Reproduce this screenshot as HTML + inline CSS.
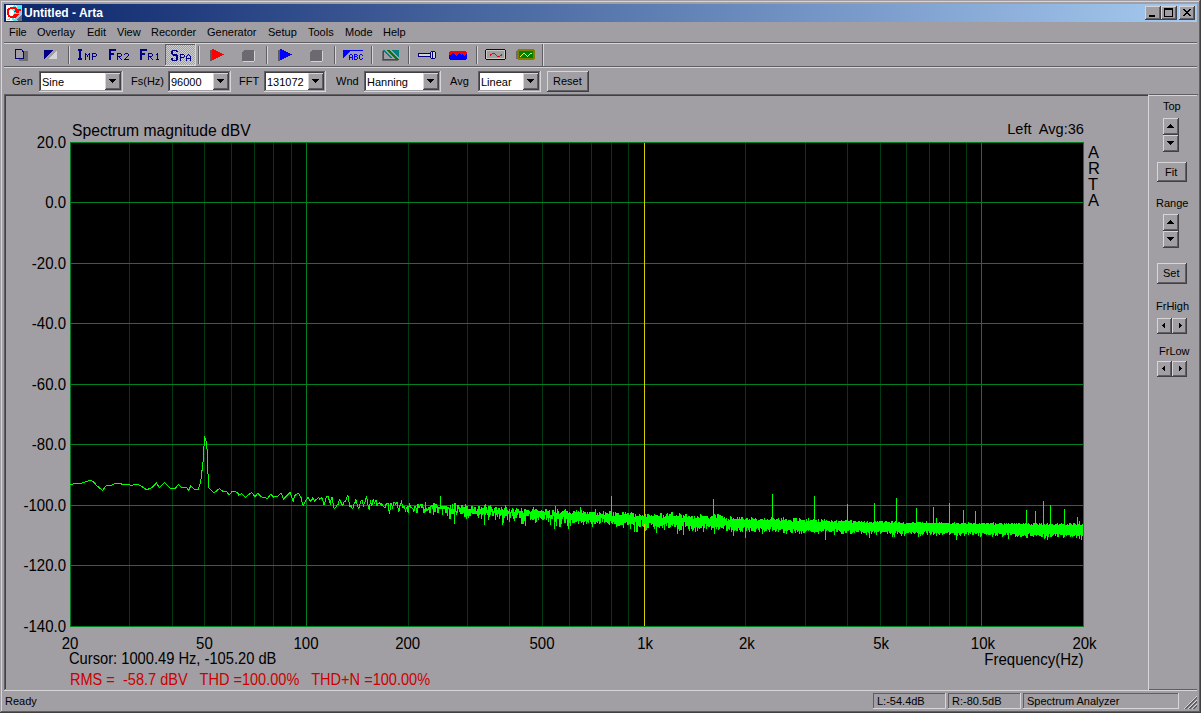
<!DOCTYPE html>
<html><head><meta charset="utf-8"><title>Arta</title>
<style>
html,body{margin:0;padding:0}
body{width:1201px;height:713px;overflow:hidden;position:relative;background:#a19fa4;font-family:"Liberation Sans",sans-serif}
body>div,body>span,body>svg{position:absolute;display:block}
span{white-space:nowrap}
</style></head><body>
<div style="left:0px;top:0px;width:1201px;height:1px;background:#a19fa4"></div><div style="left:0px;top:0px;width:1px;height:713px;background:#a19fa4"></div><div style="left:1px;top:1px;width:1199px;height:1px;background:#d6d5d8"></div><div style="left:1px;top:1px;width:1px;height:711px;background:#d6d5d8"></div><div style="left:1199px;top:1px;width:1px;height:711px;background:#5f5f63"></div><div style="left:1px;top:711px;width:1199px;height:1px;background:#5f5f63"></div><div style="left:1200px;top:0px;width:1px;height:713px;background:#404040"></div><div style="left:0px;top:712px;width:1201px;height:1px;background:#404040"></div><div style="left:4px;top:4px;width:1193px;height:18px;background:linear-gradient(to right,#0a246a,#a6caf0)"></div><span style="left:24px;top:5px;color:#fff;font-weight:bold;font-size:12px;line-height:16px">Untitled - Arta</span><div style="left:1145px;top:6px;width:16px;height:14px;background:#a19fa4"></div><div style="left:1145px;top:6px;width:15px;height:1px;background:#d6d5d8"></div><div style="left:1145px;top:6px;width:1px;height:13px;background:#d6d5d8"></div><div style="left:1145px;top:19px;width:16px;height:1px;background:#404040"></div><div style="left:1160px;top:6px;width:1px;height:14px;background:#404040"></div><div style="left:1146px;top:18px;width:14px;height:1px;background:#5f5f63"></div><div style="left:1159px;top:7px;width:1px;height:12px;background:#5f5f63"></div><div style="left:1149px;top:15px;width:6px;height:2px;background:#000"></div><div style="left:1161px;top:6px;width:16px;height:14px;background:#a19fa4"></div><div style="left:1161px;top:6px;width:15px;height:1px;background:#d6d5d8"></div><div style="left:1161px;top:6px;width:1px;height:13px;background:#d6d5d8"></div><div style="left:1161px;top:19px;width:16px;height:1px;background:#404040"></div><div style="left:1176px;top:6px;width:1px;height:14px;background:#404040"></div><div style="left:1162px;top:18px;width:14px;height:1px;background:#5f5f63"></div><div style="left:1175px;top:7px;width:1px;height:12px;background:#5f5f63"></div><div style="left:1164px;top:8px;width:7px;height:6px;border:1px solid #000;border-top-width:2px"></div><div style="left:1179px;top:6px;width:16px;height:14px;background:#a19fa4"></div><div style="left:1179px;top:6px;width:15px;height:1px;background:#d6d5d8"></div><div style="left:1179px;top:6px;width:1px;height:13px;background:#d6d5d8"></div><div style="left:1179px;top:19px;width:16px;height:1px;background:#404040"></div><div style="left:1194px;top:6px;width:1px;height:14px;background:#404040"></div><div style="left:1180px;top:18px;width:14px;height:1px;background:#5f5f63"></div><div style="left:1193px;top:7px;width:1px;height:12px;background:#5f5f63"></div><svg style="left:1183px;top:9px" width="8" height="7" viewBox="0 0 8 7" shape-rendering="crispEdges">
<path d="M0 0h2v1h1v1h2v-1h1v-1h2v1h-1v1h-1v1h-1v1h1v1h1v1h1v1h-2v-1h-1v-1h-2v1h-1v1h-2v-1h1v-1h1v-1h1v-1h-1v-1h-1v-1h-1z" fill="#000"/></svg><span style="left:9px;top:26px;font-size:11px;line-height:13px;color:#000">File</span><span style="left:37px;top:26px;font-size:11px;line-height:13px;color:#000">Overlay</span><span style="left:87px;top:26px;font-size:11px;line-height:13px;color:#000">Edit</span><span style="left:117px;top:26px;font-size:11px;line-height:13px;color:#000">View</span><span style="left:151px;top:26px;font-size:11px;line-height:13px;color:#000">Recorder</span><span style="left:207px;top:26px;font-size:11px;line-height:13px;color:#000">Generator</span><span style="left:268px;top:26px;font-size:11px;line-height:13px;color:#000">Setup</span><span style="left:308px;top:26px;font-size:11px;line-height:13px;color:#000">Tools</span><span style="left:345px;top:26px;font-size:11px;line-height:13px;color:#000">Mode</span><span style="left:383px;top:26px;font-size:11px;line-height:13px;color:#000">Help</span><div style="left:4px;top:42px;width:1193px;height:1px;background:#5f5f63"></div><div style="left:4px;top:43px;width:1193px;height:1px;background:#d6d5d8"></div><div style="left:4px;top:66px;width:1193px;height:1px;background:#5f5f63"></div><div style="left:4px;top:67px;width:1193px;height:1px;background:#d6d5d8"></div><div style="left:542px;top:44px;width:1px;height:22px;background:#5f5f63"></div><div style="left:543px;top:44px;width:1px;height:22px;background:#d6d5d8"></div><div style="left:68px;top:46px;width:1px;height:18px;background:#5f5f63"></div><div style="left:69px;top:46px;width:1px;height:18px;background:#d6d5d8"></div><div style="left:198px;top:46px;width:1px;height:18px;background:#5f5f63"></div><div style="left:199px;top:46px;width:1px;height:18px;background:#d6d5d8"></div><div style="left:266px;top:46px;width:1px;height:18px;background:#5f5f63"></div><div style="left:267px;top:46px;width:1px;height:18px;background:#d6d5d8"></div><div style="left:334px;top:46px;width:1px;height:18px;background:#5f5f63"></div><div style="left:335px;top:46px;width:1px;height:18px;background:#d6d5d8"></div><div style="left:371px;top:46px;width:1px;height:18px;background:#5f5f63"></div><div style="left:372px;top:46px;width:1px;height:18px;background:#d6d5d8"></div><div style="left:408px;top:46px;width:1px;height:18px;background:#5f5f63"></div><div style="left:409px;top:46px;width:1px;height:18px;background:#d6d5d8"></div><div style="left:476px;top:46px;width:1px;height:18px;background:#5f5f63"></div><div style="left:477px;top:46px;width:1px;height:18px;background:#d6d5d8"></div><svg style="left:15px;top:49px" width="13" height="12" shape-rendering="crispEdges">
<rect x="4" y="2" width="9" height="10" fill="#6f6f73"/>
<path d="M0.5 0.5H6.5L8.5 2.5V9.5H0.5Z" fill="#a19fa4" stroke="#000080"/>
<path d="M6 1h1v2h2v-1h-1v-1z" fill="#000080"/>
</svg><svg style="left:44px;top:50px" width="14" height="10" shape-rendering="crispEdges">
<path d="M0 0h9l-9 9z" fill="#000080"/><path d="M13 0v9h-9z" fill="#d4d4d4"/>
</svg><div style="left:165px;top:44px;width:31px;height:22px;background-color:#a19fa4;background-image:repeating-conic-gradient(#cfcfd0 0 25%, #a19fa4 0 50%);background-size:2px 2px"></div><div style="left:165px;top:44px;width:30px;height:1px;background:#5f5f63"></div><div style="left:165px;top:44px;width:1px;height:21px;background:#5f5f63"></div><div style="left:165px;top:65px;width:31px;height:1px;background:#d6d5d8"></div><div style="left:195px;top:44px;width:1px;height:22px;background:#d6d5d8"></div><svg style="left:78px;top:49px" width="4" height="11" shape-rendering="crispEdges"><path fill="#000080" d="M0 0h4v1h-4zM0 1h4v1h-4zM1 2h2v1h-2zM1 3h2v1h-2zM1 4h2v1h-2zM1 5h2v1h-2zM1 6h2v1h-2zM1 7h2v1h-2zM1 8h2v1h-2zM0 9h4v1h-4zM0 10h4v1h-4z"/></svg><svg style="left:85px;top:53px" width="5" height="7" shape-rendering="crispEdges"><path fill="#000080" d="M0 0h1v1h-1zM4 0h1v1h-1zM0 1h2v1h-2zM3 1h2v1h-2zM0 2h1v1h-1zM2 2h1v1h-1zM4 2h1v1h-1zM0 3h1v1h-1zM2 3h1v1h-1zM4 3h1v1h-1zM0 4h1v1h-1zM4 4h1v1h-1zM0 5h1v1h-1zM4 5h1v1h-1zM0 6h1v1h-1zM4 6h1v1h-1z"/></svg><svg style="left:92px;top:53px" width="5" height="7" shape-rendering="crispEdges"><path fill="#000080" d="M0 0h4v1h-4zM0 1h1v1h-1zM4 1h1v1h-1zM0 2h1v1h-1zM4 2h1v1h-1zM0 3h4v1h-4zM0 4h1v1h-1zM0 5h1v1h-1zM0 6h1v1h-1z"/></svg><svg style="left:109px;top:49px" width="7" height="11" shape-rendering="crispEdges"><path fill="#000080" d="M0 0h7v1h-7zM0 1h7v1h-7zM0 2h2v1h-2zM0 3h2v1h-2zM0 4h5v1h-5zM0 5h5v1h-5zM0 6h2v1h-2zM0 7h2v1h-2zM0 8h2v1h-2zM0 9h2v1h-2zM0 10h2v1h-2z"/></svg><svg style="left:117px;top:53px" width="5" height="7" shape-rendering="crispEdges"><path fill="#000080" d="M0 0h4v1h-4zM0 1h1v1h-1zM4 1h1v1h-1zM0 2h1v1h-1zM4 2h1v1h-1zM0 3h4v1h-4zM0 4h1v1h-1zM2 4h1v1h-1zM0 5h1v1h-1zM3 5h1v1h-1zM0 6h1v1h-1zM4 6h1v1h-1z"/></svg><svg style="left:124px;top:53px" width="5" height="7" shape-rendering="crispEdges"><path fill="#000080" d="M1 0h3v1h-3zM0 1h1v1h-1zM4 1h1v1h-1zM4 2h1v1h-1zM3 3h1v1h-1zM2 4h1v1h-1zM1 5h1v1h-1zM0 6h5v1h-5z"/></svg><svg style="left:140px;top:49px" width="7" height="11" shape-rendering="crispEdges"><path fill="#000080" d="M0 0h7v1h-7zM0 1h7v1h-7zM0 2h2v1h-2zM0 3h2v1h-2zM0 4h5v1h-5zM0 5h5v1h-5zM0 6h2v1h-2zM0 7h2v1h-2zM0 8h2v1h-2zM0 9h2v1h-2zM0 10h2v1h-2z"/></svg><svg style="left:148px;top:53px" width="5" height="7" shape-rendering="crispEdges"><path fill="#000080" d="M0 0h4v1h-4zM0 1h1v1h-1zM4 1h1v1h-1zM0 2h1v1h-1zM4 2h1v1h-1zM0 3h4v1h-4zM0 4h1v1h-1zM2 4h1v1h-1zM0 5h1v1h-1zM3 5h1v1h-1zM0 6h1v1h-1zM4 6h1v1h-1z"/></svg><svg style="left:155px;top:53px" width="5" height="7" shape-rendering="crispEdges"><path fill="#000080" d="M2 0h1v1h-1zM1 1h2v1h-2zM2 2h1v1h-1zM2 3h1v1h-1zM2 4h1v1h-1zM2 5h1v1h-1zM1 6h3v1h-3z"/></svg><svg style="left:171px;top:50px" width="7" height="11" shape-rendering="crispEdges"><path fill="#000080" d="M1 0h5v1h-5zM0 1h2v1h-2zM5 1h2v1h-2zM0 2h2v1h-2zM0 3h2v1h-2zM1 4h5v1h-5zM2 5h5v1h-5zM5 6h2v1h-2zM5 7h2v1h-2zM0 8h2v1h-2zM5 8h2v1h-2zM0 9h2v1h-2zM5 9h2v1h-2zM1 10h5v1h-5z"/></svg><svg style="left:180px;top:54px" width="5" height="7" shape-rendering="crispEdges"><path fill="#000080" d="M0 0h4v1h-4zM0 1h1v1h-1zM4 1h1v1h-1zM0 2h1v1h-1zM4 2h1v1h-1zM0 3h4v1h-4zM0 4h1v1h-1zM0 5h1v1h-1zM0 6h1v1h-1z"/></svg><svg style="left:186px;top:54px" width="5" height="7" shape-rendering="crispEdges"><path fill="#000080" d="M2 0h1v1h-1zM1 1h1v1h-1zM3 1h1v1h-1zM0 2h1v1h-1zM4 2h1v1h-1zM0 3h1v1h-1zM4 3h1v1h-1zM0 4h5v1h-5zM0 5h1v1h-1zM4 5h1v1h-1zM0 6h1v1h-1zM4 6h1v1h-1z"/></svg><svg style="left:6px;top:5px" width="16" height="16" shape-rendering="crispEdges"><path fill="#f4fcff" d="M0 0h8v1h-8zM9 0h1v1h-1zM0 1h7v1h-7zM10 1h1v1h-1zM0 2h4v1h-4zM0 3h2v1h-2zM0 4h1v1h-1zM7 4h1v1h-1zM0 5h1v1h-1zM0 6h1v1h-1zM7 6h1v1h-1zM0 7h1v1h-1zM0 8h1v1h-1zM0 9h1v1h-1zM0 10h2v1h-2zM0 11h2v1h-2zM0 12h4v1h-4zM0 13h3v1h-3zM4 13h2v1h-2zM8 13h1v1h-1zM0 14h1v1h-1zM4 14h2v1h-2zM0 15h7v1h-7z"/><path fill="#40f0f8" d="M8 0h1v1h-1zM10 0h2v1h-2zM13 0h1v1h-1zM7 1h3v1h-3zM11 1h2v1h-2zM14 1h1v1h-1zM10 2h2v1h-2zM13 2h1v1h-1zM11 3h2v1h-2zM14 3h1v1h-1zM6 4h1v1h-1zM8 4h1v1h-1zM15 4h1v1h-1zM7 5h2v1h-2zM15 5h1v1h-1zM13 6h2v1h-2zM8 7h2v1h-2zM13 7h1v1h-1zM15 7h1v1h-1zM8 8h5v1h-5zM14 8h1v1h-1zM7 9h1v1h-1zM13 9h1v1h-1zM15 9h1v1h-1zM12 10h1v1h-1zM14 10h1v1h-1zM11 11h1v1h-1zM13 11h1v1h-1zM10 12h2v1h-2zM6 13h2v1h-2zM9 13h1v1h-1zM11 13h1v1h-1zM1 14h1v1h-1zM6 14h3v1h-3zM10 14h1v1h-1zM7 15h3v1h-3zM11 15h1v1h-1z"/><path fill="#90c8e8" d="M12 0h1v1h-1zM14 0h2v1h-2zM13 1h1v1h-1zM15 1h1v1h-1zM12 2h1v1h-1zM14 2h2v1h-2zM13 3h1v1h-1zM15 3h1v1h-1zM15 6h1v1h-1zM14 7h1v1h-1zM13 8h1v1h-1zM15 8h1v1h-1zM14 9h1v1h-1zM13 10h1v1h-1zM12 11h1v1h-1zM12 12h1v1h-1zM3 13h1v1h-1zM10 13h1v1h-1zM2 14h2v1h-2zM9 14h1v1h-1zM10 15h1v1h-1z"/><path fill="#ff0000" d="M4 2h6v1h-6zM2 3h9v1h-9zM1 4h3v1h-3zM9 4h6v1h-6zM1 5h2v1h-2zM9 5h6v1h-6zM1 6h2v1h-2zM8 6h5v1h-5zM1 7h2v1h-2zM10 7h3v1h-3zM1 8h2v1h-2zM1 9h2v1h-2zM8 9h5v1h-5zM2 10h2v1h-2zM7 10h5v1h-5zM2 11h9v1h-9zM4 12h6v1h-6z"/><path fill="#ffffff" d="M4 4h2v1h-2zM3 5h4v1h-4zM3 6h4v1h-4zM3 7h5v1h-5zM3 8h5v1h-5zM3 9h4v1h-4zM4 10h3v1h-3z"/><path fill="#607080" d="M15 10h1v1h-1zM14 11h2v1h-2zM13 12h3v1h-3zM12 13h4v1h-4zM11 14h5v1h-5zM12 15h4v1h-4z"/></svg><svg style="left:210px;top:49px" width="14" height="12" shape-rendering="crispEdges"><path fill="#ff0000" d="M2 0h2v1h-2zM2 1h4v1h-4zM2 2h6v1h-6zM2 3h8v1h-8zM2 4h10v1h-10zM2 5h12v1h-12zM2 6h10v1h-10zM2 7h8v1h-8zM2 8h6v1h-6zM2 9h4v1h-4zM2 10h2v1h-2z"/><path fill="#5c5a60" d="M0 1h2v1h-2zM0 2h2v1h-2zM0 3h2v1h-2zM0 4h2v1h-2zM0 5h2v1h-2zM0 6h2v1h-2zM0 7h2v1h-2zM0 8h2v1h-2zM0 9h2v1h-2zM0 10h2v1h-2zM0 11h2v1h-2z"/></svg><svg style="left:242px;top:50px" width="13" height="12" shape-rendering="crispEdges"><path fill="#6c6a70" d="M2 0h10v1h-10zM1 1h11v1h-11zM0 2h12v1h-12zM0 3h12v1h-12zM0 4h12v1h-12zM0 5h12v1h-12zM0 6h12v1h-12zM0 7h12v1h-12zM0 8h12v1h-12zM0 9h12v1h-12zM0 10h12v1h-12z"/><path fill="#d4d4d4" d="M12 1h1v1h-1zM12 2h1v1h-1zM12 3h1v1h-1zM12 4h1v1h-1zM12 5h1v1h-1zM12 6h1v1h-1zM12 7h1v1h-1zM12 8h1v1h-1zM12 9h1v1h-1zM12 10h1v1h-1zM1 11h11v1h-11z"/></svg><svg style="left:278px;top:49px" width="14" height="12" shape-rendering="crispEdges"><path fill="#0000ff" d="M2 0h2v1h-2zM2 1h4v1h-4zM2 2h6v1h-6zM2 3h8v1h-8zM2 4h10v1h-10zM2 5h12v1h-12zM2 6h10v1h-10zM2 7h8v1h-8zM2 8h6v1h-6zM2 9h4v1h-4zM2 10h2v1h-2z"/><path fill="#5c5a60" d="M0 1h2v1h-2zM0 2h2v1h-2zM0 3h2v1h-2zM0 4h2v1h-2zM0 5h2v1h-2zM0 6h2v1h-2zM0 7h2v1h-2zM0 8h2v1h-2zM0 9h2v1h-2zM0 10h2v1h-2zM0 11h2v1h-2z"/></svg><svg style="left:310px;top:50px" width="13" height="12" shape-rendering="crispEdges"><path fill="#6c6a70" d="M2 0h10v1h-10zM1 1h11v1h-11zM0 2h12v1h-12zM0 3h12v1h-12zM0 4h12v1h-12zM0 5h12v1h-12zM0 6h12v1h-12zM0 7h12v1h-12zM0 8h12v1h-12zM0 9h12v1h-12zM0 10h12v1h-12z"/><path fill="#d4d4d4" d="M12 1h1v1h-1zM12 2h1v1h-1zM12 3h1v1h-1zM12 4h1v1h-1zM12 5h1v1h-1zM12 6h1v1h-1zM12 7h1v1h-1zM12 8h1v1h-1zM12 9h1v1h-1zM12 10h1v1h-1zM1 11h11v1h-11z"/></svg><svg style="left:343px;top:50px" width="20" height="10" shape-rendering="crispEdges"><path fill="#0000ff" d="M0 0h20v1h-20zM0 1h7v1h-7zM0 2h6v1h-6zM0 3h5v1h-5zM0 4h4v1h-4zM7 4h2v1h-2zM11 4h3v1h-3zM17 4h2v1h-2zM0 5h3v1h-3zM6 5h1v1h-1zM9 5h1v1h-1zM11 5h1v1h-1zM14 5h1v1h-1zM16 5h1v1h-1zM19 5h1v1h-1zM0 6h2v1h-2zM6 6h1v1h-1zM9 6h1v1h-1zM11 6h3v1h-3zM16 6h1v1h-1zM0 7h1v1h-1zM6 7h4v1h-4zM11 7h1v1h-1zM14 7h1v1h-1zM16 7h1v1h-1zM6 8h1v1h-1zM9 8h1v1h-1zM11 8h1v1h-1zM14 8h1v1h-1zM16 8h1v1h-1zM19 8h1v1h-1zM6 9h1v1h-1zM9 9h1v1h-1zM11 9h3v1h-3zM17 9h2v1h-2z"/></svg><svg style="left:382px;top:50px" width="17" height="11" shape-rendering="crispEdges"><path fill="#008080" d="M1 0h2v1h-2zM10 0h7v1h-7zM2 1h2v1h-2zM11 1h6v1h-6zM3 2h2v1h-2zM12 2h5v1h-5zM4 3h2v1h-2zM13 3h4v1h-4zM5 4h2v1h-2zM14 4h3v1h-3zM6 5h2v1h-2zM15 5h2v1h-2zM7 6h2v1h-2zM16 6h1v1h-1zM8 7h2v1h-2z"/><path fill="#008000" d="M5 0h3v1h-3zM1 1h1v1h-1zM6 1h3v1h-3zM1 2h1v1h-1zM7 2h3v1h-3zM1 3h1v1h-1zM8 3h3v1h-3zM1 4h1v1h-1zM9 4h3v1h-3zM1 5h1v1h-1zM10 5h3v1h-3zM1 6h1v1h-1zM11 6h3v1h-3zM1 7h1v1h-1zM12 7h3v1h-3zM1 8h1v1h-1zM13 8h3v1h-3zM1 9h16v1h-16z"/><path fill="#6a686e" d="M0 1h1v1h-1zM0 2h1v1h-1zM0 3h1v1h-1zM0 4h1v1h-1zM0 5h1v1h-1zM0 6h1v1h-1zM0 7h1v1h-1zM0 8h1v1h-1zM0 9h1v1h-1zM0 10h16v1h-16z"/></svg><svg style="left:418px;top:51px" width="18" height="8" shape-rendering="crispEdges"><path fill="#000080" d="M13 0h4v1h-4zM12 1h1v1h-1zM14 1h1v1h-1zM17 1h1v1h-1zM0 2h13v1h-13zM14 2h1v1h-1zM17 2h1v1h-1zM0 3h1v1h-1zM12 3h1v1h-1zM14 3h1v1h-1zM17 3h1v1h-1zM0 4h1v1h-1zM12 4h1v1h-1zM14 4h1v1h-1zM17 4h1v1h-1zM0 5h13v1h-13zM14 5h1v1h-1zM17 5h1v1h-1zM12 6h1v1h-1zM14 6h1v1h-1zM17 6h1v1h-1zM13 7h4v1h-4z"/><path fill="#d6d6ce" d="M13 1h1v1h-1zM15 1h2v1h-2zM13 2h1v1h-1zM15 2h2v1h-2zM1 3h11v1h-11zM13 3h1v1h-1zM15 3h2v1h-2zM1 4h11v1h-11zM13 4h1v1h-1zM15 4h2v1h-2zM13 5h1v1h-1zM15 5h2v1h-2zM13 6h1v1h-1zM15 6h2v1h-2z"/></svg><svg style="left:449px;top:51px" width="18" height="9" shape-rendering="crispEdges"><path fill="#ff0000" d="M1 0h16v1h-16zM0 1h18v1h-18zM0 2h3v1h-3zM5 2h5v1h-5zM11 2h7v1h-7zM0 3h2v1h-2zM6 3h3v1h-3zM12 3h1v1h-1zM14 3h3v1h-3zM7 4h1v1h-1zM15 4h1v1h-1z"/><path fill="#0000ff" d="M3 2h2v1h-2zM10 2h1v1h-1zM2 3h4v1h-4zM9 3h3v1h-3zM13 3h1v1h-1zM17 3h1v1h-1zM0 4h7v1h-7zM8 4h7v1h-7zM16 4h2v1h-2zM0 5h18v1h-18zM0 6h18v1h-18zM0 7h18v1h-18zM1 8h16v1h-16z"/></svg><svg style="left:485px;top:49px" width="21" height="11" shape-rendering="crispEdges"><path fill="#000080" d="M1 0h19v1h-19zM0 1h1v1h-1zM20 1h1v1h-1zM0 2h1v1h-1zM20 2h1v1h-1zM0 3h1v1h-1zM20 3h1v1h-1zM0 4h1v1h-1zM20 4h1v1h-1zM0 5h1v1h-1zM20 5h1v1h-1zM0 6h1v1h-1zM20 6h1v1h-1zM0 7h1v1h-1zM20 7h1v1h-1zM0 8h1v1h-1zM20 8h1v1h-1zM0 9h1v1h-1zM20 9h1v1h-1zM1 10h19v1h-19z"/><path fill="#c8c8c0" d="M1 1h19v1h-19zM1 2h1v1h-1zM19 2h1v1h-1zM1 3h1v1h-1zM19 3h1v1h-1zM1 4h1v1h-1zM19 4h1v1h-1zM1 5h1v1h-1zM19 5h1v1h-1zM1 6h1v1h-1zM19 6h1v1h-1zM1 7h1v1h-1zM19 7h1v1h-1zM1 8h1v1h-1zM19 8h1v1h-1zM1 9h19v1h-19z"/><path fill="#ff0000" d="M7 4h3v1h-3zM5 5h2v1h-2zM10 5h1v1h-1zM16 5h1v1h-1zM5 6h1v1h-1zM11 6h1v1h-1zM15 6h2v1h-2zM12 7h3v1h-3z"/></svg><svg style="left:516px;top:49px" width="19" height="11" shape-rendering="crispEdges"><path fill="#808000" d="M2 0h16v1h-16zM1 1h18v1h-18zM1 2h2v1h-2zM17 2h2v1h-2zM1 3h2v1h-2zM17 3h2v1h-2zM1 4h2v1h-2zM17 4h2v1h-2zM1 5h2v1h-2zM17 5h2v1h-2zM1 6h2v1h-2zM17 6h2v1h-2zM1 7h2v1h-2zM17 7h2v1h-2zM1 8h2v1h-2zM17 8h2v1h-2zM1 9h18v1h-18zM2 10h16v1h-16z"/><path fill="#6a686e" d="M0 2h1v1h-1zM0 3h1v1h-1zM0 4h1v1h-1zM0 5h1v1h-1zM0 6h1v1h-1zM0 7h1v1h-1zM0 8h1v1h-1zM0 9h1v1h-1z"/><path fill="#008000" d="M3 2h14v1h-14zM3 3h14v1h-14zM3 4h4v1h-4zM9 4h5v1h-5zM16 4h1v1h-1zM3 5h3v1h-3zM7 5h2v1h-2zM10 5h3v1h-3zM14 5h3v1h-3zM3 6h2v1h-2zM6 6h4v1h-4zM11 6h1v1h-1zM13 6h4v1h-4zM3 7h1v1h-1zM5 7h6v1h-6zM12 7h5v1h-5zM3 8h14v1h-14z"/><path fill="#ffff00" d="M7 4h2v1h-2zM14 4h2v1h-2zM6 5h1v1h-1zM9 5h1v1h-1zM13 5h1v1h-1zM5 6h1v1h-1zM10 6h1v1h-1zM12 6h1v1h-1zM4 7h1v1h-1zM11 7h1v1h-1z"/></svg><span style="left:12px;top:75px;font-size:11px;line-height:13px;color:#000">Gen</span><div style="left:39px;top:71px;width:84px;height:21px;background:#fff"></div><div style="left:39px;top:71px;width:83px;height:1px;background:#5f5f63"></div><div style="left:39px;top:71px;width:1px;height:20px;background:#5f5f63"></div><div style="left:40px;top:72px;width:81px;height:1px;background:#404040"></div><div style="left:40px;top:72px;width:1px;height:18px;background:#404040"></div><div style="left:39px;top:91px;width:84px;height:1px;background:#d6d5d8"></div><div style="left:122px;top:71px;width:1px;height:21px;background:#d6d5d8"></div><div style="left:40px;top:90px;width:82px;height:1px;background:#a19fa4"></div><div style="left:121px;top:72px;width:1px;height:19px;background:#a19fa4"></div><div style="left:105px;top:73px;width:16px;height:17px;background:#a19fa4"></div><div style="left:105px;top:73px;width:15px;height:1px;background:#d6d5d8"></div><div style="left:105px;top:73px;width:1px;height:16px;background:#d6d5d8"></div><div style="left:105px;top:89px;width:16px;height:1px;background:#404040"></div><div style="left:120px;top:73px;width:1px;height:17px;background:#404040"></div><div style="left:106px;top:88px;width:14px;height:1px;background:#5f5f63"></div><div style="left:119px;top:74px;width:1px;height:15px;background:#5f5f63"></div><svg style="left:109px;top:79px" width="7" height="4" shape-rendering="crispEdges"><path d="M0 0h7l-3.5 4z" fill="#000"/></svg><span style="left:42px;top:76px;font-size:11px;line-height:13px;color:#000">Sine</span><span style="left:131px;top:75px;font-size:11px;line-height:13px;color:#000">Fs(Hz)</span><div style="left:168px;top:71px;width:63px;height:21px;background:#fff"></div><div style="left:168px;top:71px;width:62px;height:1px;background:#5f5f63"></div><div style="left:168px;top:71px;width:1px;height:20px;background:#5f5f63"></div><div style="left:169px;top:72px;width:60px;height:1px;background:#404040"></div><div style="left:169px;top:72px;width:1px;height:18px;background:#404040"></div><div style="left:168px;top:91px;width:63px;height:1px;background:#d6d5d8"></div><div style="left:230px;top:71px;width:1px;height:21px;background:#d6d5d8"></div><div style="left:169px;top:90px;width:61px;height:1px;background:#a19fa4"></div><div style="left:229px;top:72px;width:1px;height:19px;background:#a19fa4"></div><div style="left:213px;top:73px;width:16px;height:17px;background:#a19fa4"></div><div style="left:213px;top:73px;width:15px;height:1px;background:#d6d5d8"></div><div style="left:213px;top:73px;width:1px;height:16px;background:#d6d5d8"></div><div style="left:213px;top:89px;width:16px;height:1px;background:#404040"></div><div style="left:228px;top:73px;width:1px;height:17px;background:#404040"></div><div style="left:214px;top:88px;width:14px;height:1px;background:#5f5f63"></div><div style="left:227px;top:74px;width:1px;height:15px;background:#5f5f63"></div><svg style="left:217px;top:79px" width="7" height="4" shape-rendering="crispEdges"><path d="M0 0h7l-3.5 4z" fill="#000"/></svg><span style="left:171px;top:76px;font-size:11px;line-height:13px;color:#000">96000</span><span style="left:239px;top:75px;font-size:11px;line-height:13px;color:#000">FFT</span><div style="left:264px;top:71px;width:62px;height:21px;background:#fff"></div><div style="left:264px;top:71px;width:61px;height:1px;background:#5f5f63"></div><div style="left:264px;top:71px;width:1px;height:20px;background:#5f5f63"></div><div style="left:265px;top:72px;width:59px;height:1px;background:#404040"></div><div style="left:265px;top:72px;width:1px;height:18px;background:#404040"></div><div style="left:264px;top:91px;width:62px;height:1px;background:#d6d5d8"></div><div style="left:325px;top:71px;width:1px;height:21px;background:#d6d5d8"></div><div style="left:265px;top:90px;width:60px;height:1px;background:#a19fa4"></div><div style="left:324px;top:72px;width:1px;height:19px;background:#a19fa4"></div><div style="left:308px;top:73px;width:16px;height:17px;background:#a19fa4"></div><div style="left:308px;top:73px;width:15px;height:1px;background:#d6d5d8"></div><div style="left:308px;top:73px;width:1px;height:16px;background:#d6d5d8"></div><div style="left:308px;top:89px;width:16px;height:1px;background:#404040"></div><div style="left:323px;top:73px;width:1px;height:17px;background:#404040"></div><div style="left:309px;top:88px;width:14px;height:1px;background:#5f5f63"></div><div style="left:322px;top:74px;width:1px;height:15px;background:#5f5f63"></div><svg style="left:312px;top:79px" width="7" height="4" shape-rendering="crispEdges"><path d="M0 0h7l-3.5 4z" fill="#000"/></svg><span style="left:267px;top:76px;font-size:11px;line-height:13px;color:#000">131072</span><span style="left:336px;top:75px;font-size:11px;line-height:13px;color:#000">Wnd</span><div style="left:364px;top:71px;width:77px;height:21px;background:#fff"></div><div style="left:364px;top:71px;width:76px;height:1px;background:#5f5f63"></div><div style="left:364px;top:71px;width:1px;height:20px;background:#5f5f63"></div><div style="left:365px;top:72px;width:74px;height:1px;background:#404040"></div><div style="left:365px;top:72px;width:1px;height:18px;background:#404040"></div><div style="left:364px;top:91px;width:77px;height:1px;background:#d6d5d8"></div><div style="left:440px;top:71px;width:1px;height:21px;background:#d6d5d8"></div><div style="left:365px;top:90px;width:75px;height:1px;background:#a19fa4"></div><div style="left:439px;top:72px;width:1px;height:19px;background:#a19fa4"></div><div style="left:423px;top:73px;width:16px;height:17px;background:#a19fa4"></div><div style="left:423px;top:73px;width:15px;height:1px;background:#d6d5d8"></div><div style="left:423px;top:73px;width:1px;height:16px;background:#d6d5d8"></div><div style="left:423px;top:89px;width:16px;height:1px;background:#404040"></div><div style="left:438px;top:73px;width:1px;height:17px;background:#404040"></div><div style="left:424px;top:88px;width:14px;height:1px;background:#5f5f63"></div><div style="left:437px;top:74px;width:1px;height:15px;background:#5f5f63"></div><svg style="left:427px;top:79px" width="7" height="4" shape-rendering="crispEdges"><path d="M0 0h7l-3.5 4z" fill="#000"/></svg><span style="left:367px;top:76px;font-size:11px;line-height:13px;color:#000">Hanning</span><span style="left:450px;top:75px;font-size:11px;line-height:13px;color:#000">Avg</span><div style="left:478px;top:71px;width:63px;height:21px;background:#fff"></div><div style="left:478px;top:71px;width:62px;height:1px;background:#5f5f63"></div><div style="left:478px;top:71px;width:1px;height:20px;background:#5f5f63"></div><div style="left:479px;top:72px;width:60px;height:1px;background:#404040"></div><div style="left:479px;top:72px;width:1px;height:18px;background:#404040"></div><div style="left:478px;top:91px;width:63px;height:1px;background:#d6d5d8"></div><div style="left:540px;top:71px;width:1px;height:21px;background:#d6d5d8"></div><div style="left:479px;top:90px;width:61px;height:1px;background:#a19fa4"></div><div style="left:539px;top:72px;width:1px;height:19px;background:#a19fa4"></div><div style="left:523px;top:73px;width:16px;height:17px;background:#a19fa4"></div><div style="left:523px;top:73px;width:15px;height:1px;background:#d6d5d8"></div><div style="left:523px;top:73px;width:1px;height:16px;background:#d6d5d8"></div><div style="left:523px;top:89px;width:16px;height:1px;background:#404040"></div><div style="left:538px;top:73px;width:1px;height:17px;background:#404040"></div><div style="left:524px;top:88px;width:14px;height:1px;background:#5f5f63"></div><div style="left:537px;top:74px;width:1px;height:15px;background:#5f5f63"></div><svg style="left:527px;top:79px" width="7" height="4" shape-rendering="crispEdges"><path d="M0 0h7l-3.5 4z" fill="#000"/></svg><span style="left:481px;top:76px;font-size:11px;line-height:13px;color:#000">Linear</span><div style="left:547px;top:71px;width:42px;height:21px;background:#a19fa4"></div><div style="left:547px;top:71px;width:41px;height:1px;background:#d6d5d8"></div><div style="left:547px;top:71px;width:1px;height:20px;background:#d6d5d8"></div><div style="left:547px;top:91px;width:42px;height:1px;background:#404040"></div><div style="left:588px;top:71px;width:1px;height:21px;background:#404040"></div><div style="left:548px;top:90px;width:40px;height:1px;background:#5f5f63"></div><div style="left:587px;top:72px;width:1px;height:19px;background:#5f5f63"></div><span style="left:553px;top:75px;font-size:11px;line-height:13px;color:#000">Reset</span><div style="left:4px;top:94px;width:1144px;height:1px;background:#5f5f63"></div><div style="left:4px;top:94px;width:1px;height:596px;background:#5f5f63"></div><div style="left:5px;top:95px;width:1143px;height:1px;background:#404040"></div><div style="left:5px;top:95px;width:1px;height:594px;background:#404040"></div><div style="left:4px;top:690px;width:1193px;height:1px;background:#d6d5d8"></div><div style="left:1148px;top:95px;width:1px;height:596px;background:#d6d5d8"></div><div style="left:1149px;top:94px;width:49px;height:1px;background:#5f5f63"></div><div style="left:1149px;top:95px;width:48px;height:1px;background:#d6d5d8"></div><div style="left:1149px;top:689px;width:48px;height:1px;background:#5f5f63"></div><svg style="left:0;top:0" width="1201" height="713" shape-rendering="crispEdges"><rect x="70" y="142" width="1014" height="485" fill="#000"/><rect x="129" y="142" width="1" height="484" fill="#003a10"/><rect x="172" y="142" width="1" height="484" fill="#003a10"/><rect x="204" y="142" width="1" height="484" fill="#003a10"/><rect x="231" y="142" width="1" height="484" fill="#003a10"/><rect x="254" y="142" width="1" height="484" fill="#003a10"/><rect x="273" y="142" width="1" height="484" fill="#003a10"/><rect x="291" y="142" width="1" height="484" fill="#003a10"/><rect x="306" y="142" width="1" height="484" fill="#008020"/><rect x="408" y="142" width="1" height="484" fill="#003a10"/><rect x="467" y="142" width="1" height="484" fill="#003a10"/><rect x="509" y="142" width="1" height="484" fill="#003a10"/><rect x="542" y="142" width="1" height="484" fill="#003a10"/><rect x="569" y="142" width="1" height="484" fill="#003a10"/><rect x="591" y="142" width="1" height="484" fill="#003a10"/><rect x="611" y="142" width="1" height="484" fill="#003a10"/><rect x="628" y="142" width="1" height="484" fill="#003a10"/><rect x="644" y="142" width="1" height="484" fill="#008020"/><rect x="745" y="142" width="1" height="484" fill="#003a10"/><rect x="805" y="142" width="1" height="484" fill="#003a10"/><rect x="847" y="142" width="1" height="484" fill="#003a10"/><rect x="880" y="142" width="1" height="484" fill="#003a10"/><rect x="906" y="142" width="1" height="484" fill="#003a10"/><rect x="929" y="142" width="1" height="484" fill="#003a10"/><rect x="949" y="142" width="1" height="484" fill="#003a10"/><rect x="966" y="142" width="1" height="484" fill="#003a10"/><rect x="981" y="142" width="1" height="484" fill="#008020"/><rect x="70" y="142" width="1014" height="1" fill="#008020"/><rect x="70" y="202" width="1014" height="1" fill="#008020"/><rect x="70" y="263" width="1014" height="1" fill="#008020"/><rect x="70" y="323" width="1014" height="1" fill="#008020"/><rect x="70" y="384" width="1014" height="1" fill="#008020"/><rect x="70" y="444" width="1014" height="1" fill="#008020"/><rect x="70" y="505" width="1014" height="1" fill="#008020"/><rect x="70" y="565" width="1014" height="1" fill="#008020"/><rect x="70" y="626" width="1014" height="1" fill="#008020"/><rect x="70" y="142" width="1" height="485" fill="#008020"/><rect x="1083" y="142" width="1" height="485" fill="#008020"/><rect x="644" y="143" width="1" height="483" fill="#d8d000"/><polyline shape-rendering="crispEdges" fill="none" stroke="#00ff00" stroke-width="1" points="70.2,484.3 81.5,483.2 86.0,481.7 89.7,480.2 93.5,481.7 96.5,485.5 102.5,490.4 106.2,485.8 111.5,485.2 115.2,483.2 120.5,483.2 122.0,484.3 129.5,484.7 131.7,485.5 134.0,484.3 138.4,484.7 141.4,486.2 146.7,489.7 151.9,487.7 156.4,483.2 159.4,487.3 164.7,482.5 170.7,488.5 175.2,488.5 178.6,484.3 181.2,487.3 186.4,487.3 188.7,490.3 190.9,485.8 193.9,489.2 198.4,489.2 200.6,482.5 202.1,469.7 203.6,457.0 204.4,436.0 205.9,440.5 206.6,443.5 207.7,457.0 208.1,478.0 208.9,487.7 214.1,493.0 219.4,488.5 223.1,491.5 226.9,491.8 229.1,495.2 232.1,491.5 237.4,492.2 238.9,495.2 241.9,493.7 245.6,497.4 247.9,495.2 251.7,492.5 255.0,496.7 257.7,493.2 261.7,497.0 267.7,498.5 270.7,494.3 273.7,497.0 277.5,496.2 281.2,493.2 283.5,499.2 290.2,492.2 293.2,501.5 294.7,495.5 298.5,493.2"/><polyline shape-rendering="crispEdges" fill="none" stroke="#00ff00" stroke-width="1" points="298.5,493.2 301.1,497.6 302.2,502.9 303.3,505.5 304.4,503.2 305.4,500.7 306.5,499.7 307.6,497.5 308.6,497.6 309.7,500.4 310.7,501.2 311.8,500.0 312.8,497.8 313.8,499.2 314.8,501.4 315.8,499.6 316.9,498.9 317.8,498.1 318.8,497.3 319.8,499.1 320.8,498.6 321.8,497.4 322.7,500.0 323.7,504.4 324.6,504.5 325.6,499.2 326.5,496.9 327.4,497.0 328.4,496.8 329.3,500.7 330.2,503.7 331.1,499.9 332.0,497.5 332.9,502.6 333.8,507.8 334.7,508.1 335.6,507.6 336.4,506.1 337.3,504.8 338.2,504.8 339.0,501.3 339.9,499.2 340.7,501.8 341.6,504.0 342.4,505.0 343.3,504.0 344.1,502.0 344.9,501.8 345.7,501.0 346.6,498.3 347.4,495.7 348.2,496.9 349.0,502.3 349.8,506.4 350.6,506.0 351.4,505.5 352.1,508.6 352.9,508.9 353.7,504.8 354.5,503.6 355.2,502.1 356.0,499.6 356.8,502.6 357.5,506.4 358.3,507.9 359.0,508.5 359.8,504.7 360.5,501.5 361.3,500.2 362.0,499.8 362.7,503.6 363.5,505.5 364.2,503.9 364.9,502.1 365.6,499.0 366.3,497.0 367.0,499.4 367.8,503.6 368.5,507.3 369.2,509.6 369.9,504.9 370.5,500.0 371.2,503.6 371.9,505.5 372.6,501.6 373.3,498.9 374.0,502.2 374.6,504.2 375.3,500.0 376.0,500.3 376.6,505.0 377.3,505.6 378.0,503.3 378.6,503.2 379.3,503.5 379.9,502.3 380.6,504.6 381.2,505.4 381.9,503.6 382.5,504.4 383.1,506.1 383.8,506.9 384.4,507.5 385.0,507.8 385.7,505.6 386.3,503.5 386.9,503.6 387.5,503.5 388.1,503.4 388.7,508.4 389.3,514.3 390.0,510.0 390.6,503.8 391.2,503.7 391.8,505.6 392.4,508.0 393.0,506.3 393.5,502.3 394.1,501.9 394.7,502.7 395.3,503.5 395.9,504.2 396.5,503.5 397.1,502.3 397.6,504.5 398.2,509.3 398.8,512.2 399.3,509.5 399.9,505.5 400.5,505.4 401.0,502.8 401.6,501.3 402.2,505.0 402.7,507.5 403.3,507.4 403.8,506.9 404.4,506.6 404.9,508.7 405.5,510.7 406.0,509.4 406.6,507.6 407.1,506.5 407.6,509.9 408.2,512.8 408.7,509.4 409.2,504.8 409.8,503.9 410.3,506.2 410.8,507.8 411.3,507.9 411.9,507.7 412.4,508.2 412.9,508.3 413.4,510.9 413.9,511.8 414.5,507.5 415.0,505.8 415.5,506.6 416.0,507.7 416.5,511.3 417.0,512.8 417.5,508.2 418.0,504.0 418.5,504.9 419.0,507.4 419.5,507.0 420.0,505.9 420.5,505.8 421.0,504.2"/><path fill="#00ff00" d="M421 504h1V508h-1zM422 504h1V508h-1zM423 507h1V513h-1zM424 509h1V513h-1zM425 502h1V512h-1zM426 508h1V511h-1zM427 509h1V511h-1zM428 507h1V510h-1zM429 507h1V513h-1zM430 506h1V513h-1zM431 505h1V507h-1zM432 505h1V509h-1zM433 503h1V515h-1zM434 503h1V512h-1zM435 504h1V512h-1zM436 504h1V508h-1zM437 506h1V513h-1zM438 507h1V513h-1zM439 507h1V509h-1zM440 505h1V509h-1zM441 506h1V509h-1zM442 506h1V515h-1zM443 506h1V509h-1zM444 506h1V509h-1zM445 506h1V513h-1zM446 506h1V513h-1zM447 507h1V516h-1zM448 507h1V509h-1zM449 508h1V519h-1zM450 505h1V519h-1zM451 509h1V514h-1zM452 504h1V514h-1zM453 509h1V514h-1zM454 503h1V524h-1zM455 503h1V512h-1zM456 511h1V515h-1zM457 505h1V513h-1zM458 505h1V509h-1zM459 507h1V512h-1zM460 508h1V514h-1zM461 505h1V514h-1zM462 505h1V514h-1zM463 507h1V513h-1zM464 507h1V517h-1zM465 510h1V517h-1zM466 506h1V519h-1zM467 506h1V516h-1zM468 509h1V518h-1zM469 509h1V516h-1zM470 509h1V516h-1zM471 506h1V513h-1zM472 506h1V514h-1zM473 509h1V514h-1zM474 507h1V514h-1zM475 507h1V514h-1zM476 511h1V514h-1zM477 509h1V516h-1zM478 506h1V518h-1zM479 506h1V515h-1zM480 509h1V514h-1zM481 507h1V519h-1zM482 508h1V515h-1zM483 508h1V514h-1zM484 505h1V525h-1zM485 504h1V515h-1zM486 507h1V513h-1zM487 510h1V515h-1zM488 506h1V520h-1zM489 506h1V517h-1zM490 509h1V515h-1zM491 507h1V512h-1zM492 509h1V516h-1zM493 511h1V516h-1zM494 508h1V513h-1zM495 507h1V520h-1zM496 507h1V515h-1zM497 510h1V517h-1zM498 508h1V514h-1zM499 508h1V519h-1zM500 510h1V516h-1zM501 507h1V515h-1zM502 509h1V525h-1zM503 510h1V523h-1zM504 508h1V518h-1zM505 505h1V516h-1zM506 507h1V516h-1zM507 510h1V520h-1zM508 511h1V514h-1zM509 509h1V522h-1zM510 512h1V518h-1zM511 510h1V513h-1zM512 508h1V516h-1zM513 509h1V519h-1zM514 512h1V521h-1zM515 510h1V518h-1zM516 508h1V518h-1zM517 509h1V515h-1zM518 509h1V513h-1zM519 511h1V518h-1zM520 511h1V518h-1zM521 508h1V524h-1zM522 511h1V524h-1zM523 513h1V524h-1zM524 509h1V521h-1zM525 509h1V526h-1zM526 510h1V516h-1zM527 510h1V516h-1zM528 510h1V516h-1zM529 511h1V514h-1zM530 512h1V520h-1zM531 511h1V519h-1zM532 509h1V520h-1zM533 507h1V520h-1zM534 510h1V519h-1zM535 509h1V523h-1zM536 509h1V522h-1zM537 510h1V518h-1zM538 511h1V520h-1zM539 511h1V517h-1zM540 511h1V518h-1zM541 510h1V519h-1zM542 511h1V520h-1zM543 511h1V520h-1zM544 512h1V519h-1zM545 509h1V515h-1zM546 509h1V520h-1zM547 511h1V518h-1zM548 511h1V522h-1zM549 510h1V518h-1zM550 515h1V525h-1zM551 515h1V519h-1zM552 510h1V519h-1zM553 510h1V516h-1zM554 512h1V529h-1zM555 508h1V522h-1zM556 513h1V526h-1zM557 509h1V519h-1zM558 511h1V519h-1zM559 514h1V527h-1zM560 513h1V527h-1zM561 512h1V524h-1zM562 511h1V519h-1zM563 511h1V517h-1zM564 510h1V523h-1zM565 509h1V523h-1zM566 511h1V519h-1zM567 511h1V526h-1zM568 513h1V529h-1zM569 512h1V523h-1zM570 513h1V526h-1zM571 514h1V520h-1zM572 513h1V523h-1zM573 511h1V523h-1zM574 511h1V523h-1zM575 512h1V522h-1zM576 510h1V522h-1zM577 512h1V521h-1zM578 511h1V524h-1zM579 512h1V521h-1zM580 507h1V521h-1zM581 510h1V523h-1zM582 513h1V522h-1zM583 511h1V525h-1zM584 512h1V522h-1zM585 512h1V521h-1zM586 514h1V524h-1zM587 512h1V522h-1zM588 514h1V523h-1zM589 512h1V520h-1zM590 512h1V522h-1zM591 512h1V524h-1zM592 512h1V527h-1zM593 512h1V522h-1zM594 512h1V524h-1zM595 509h1V524h-1zM596 515h1V522h-1zM597 513h1V523h-1zM598 515h1V521h-1zM599 512h1V524h-1zM600 513h1V523h-1zM601 514h1V518h-1zM602 514h1V522h-1zM603 511h1V519h-1zM604 515h1V523h-1zM605 512h1V522h-1zM606 513h1V522h-1zM607 513h1V523h-1zM608 514h1V524h-1zM609 511h1V525h-1zM610 511h1V521h-1zM611 517h1V523h-1zM612 516h1V524h-1zM613 512h1V522h-1zM614 516h1V524h-1zM615 512h1V524h-1zM616 513h1V527h-1zM617 513h1V526h-1zM618 513h1V526h-1zM619 515h1V526h-1zM620 515h1V525h-1zM621 515h1V525h-1zM622 512h1V525h-1zM623 512h1V528h-1zM624 514h1V523h-1zM625 512h1V523h-1zM626 514h1V522h-1zM627 513h1V525h-1zM628 513h1V525h-1zM629 515h1V524h-1zM630 513h1V529h-1zM631 512h1V524h-1zM632 513h1V524h-1zM633 513h1V525h-1zM634 517h1V532h-1zM635 514h1V522h-1zM636 516h1V532h-1zM637 516h1V532h-1zM638 516h1V526h-1zM639 514h1V527h-1zM640 515h1V527h-1zM641 516h1V520h-1zM642 515h1V526h-1zM643 516h1V527h-1zM644 516h1V524h-1zM645 514h1V531h-1zM646 517h1V530h-1zM647 514h1V528h-1zM648 514h1V528h-1zM649 515h1V523h-1zM650 516h1V523h-1zM651 515h1V525h-1zM652 516h1V524h-1zM653 516h1V527h-1zM654 514h1V529h-1zM655 515h1V526h-1zM656 515h1V533h-1zM657 515h1V527h-1zM658 516h1V527h-1zM659 516h1V528h-1zM660 513h1V526h-1zM661 513h1V526h-1zM662 518h1V528h-1zM663 515h1V525h-1zM664 517h1V530h-1zM665 516h1V524h-1zM666 514h1V526h-1zM667 513h1V523h-1zM668 516h1V528h-1zM669 514h1V528h-1zM670 514h1V527h-1zM671 512h1V525h-1zM672 512h1V526h-1zM673 516h1V524h-1zM674 516h1V527h-1zM675 516h1V527h-1zM676 515h1V525h-1zM677 516h1V534h-1zM678 516h1V529h-1zM679 513h1V531h-1zM680 514h1V530h-1zM681 515h1V530h-1zM682 518h1V526h-1zM683 515h1V535h-1zM684 516h1V522h-1zM685 514h1V527h-1zM686 514h1V526h-1zM687 517h1V526h-1zM688 516h1V529h-1zM689 516h1V531h-1zM690 517h1V526h-1zM691 516h1V529h-1zM692 516h1V531h-1zM693 519h1V530h-1zM694 516h1V528h-1zM695 518h1V532h-1zM696 518h1V527h-1zM697 516h1V531h-1zM698 517h1V528h-1zM699 518h1V529h-1zM700 514h1V528h-1zM701 515h1V528h-1zM702 516h1V526h-1zM703 516h1V532h-1zM704 516h1V528h-1zM705 516h1V524h-1zM706 516h1V529h-1zM707 516h1V526h-1zM708 518h1V527h-1zM709 519h1V527h-1zM710 517h1V526h-1zM711 516h1V530h-1zM712 516h1V528h-1zM713 513h1V528h-1zM714 514h1V534h-1zM715 515h1V527h-1zM716 518h1V529h-1zM717 514h1V527h-1zM718 514h1V530h-1zM719 515h1V529h-1zM720 515h1V527h-1zM721 516h1V528h-1zM722 516h1V528h-1zM723 518h1V529h-1zM724 517h1V526h-1zM725 519h1V525h-1zM726 518h1V531h-1zM727 521h1V531h-1zM728 519h1V529h-1zM729 520h1V530h-1zM730 516h1V527h-1zM731 517h1V532h-1zM732 519h1V530h-1zM733 518h1V536h-1zM734 519h1V531h-1zM735 519h1V530h-1zM736 519h1V531h-1zM737 517h1V531h-1zM738 519h1V528h-1zM739 517h1V530h-1zM740 519h1V532h-1zM741 517h1V531h-1zM742 517h1V532h-1zM743 519h1V528h-1zM744 520h1V527h-1zM745 519h1V538h-1zM746 518h1V531h-1zM747 518h1V528h-1zM748 520h1V530h-1zM749 519h1V532h-1zM750 520h1V528h-1zM751 517h1V531h-1zM752 518h1V531h-1zM753 519h1V531h-1zM754 519h1V532h-1zM755 518h1V532h-1zM756 519h1V529h-1zM757 521h1V528h-1zM758 520h1V530h-1zM759 520h1V532h-1zM760 519h1V528h-1zM761 519h1V529h-1zM762 519h1V534h-1zM763 520h1V530h-1zM764 518h1V532h-1zM765 520h1V531h-1zM766 520h1V531h-1zM767 519h1V529h-1zM768 520h1V530h-1zM769 520h1V532h-1zM770 519h1V529h-1zM771 517h1V527h-1zM772 519h1V531h-1zM773 518h1V530h-1zM774 519h1V530h-1zM775 520h1V532h-1zM776 519h1V531h-1zM777 519h1V529h-1zM778 518h1V532h-1zM779 520h1V530h-1zM780 521h1V530h-1zM781 518h1V529h-1zM782 520h1V529h-1zM783 517h1V533h-1zM784 520h1V533h-1zM785 519h1V531h-1zM786 519h1V534h-1zM787 521h1V531h-1zM788 520h1V530h-1zM789 520h1V530h-1zM790 520h1V532h-1zM791 521h1V533h-1zM792 522h1V533h-1zM793 518h1V529h-1zM794 518h1V531h-1zM795 518h1V533h-1zM796 518h1V530h-1zM797 521h1V532h-1zM798 521h1V531h-1zM799 518h1V534h-1zM800 519h1V531h-1zM801 520h1V534h-1zM802 520h1V531h-1zM803 520h1V533h-1zM804 520h1V533h-1zM805 522h1V532h-1zM806 519h1V531h-1zM807 521h1V530h-1zM808 518h1V531h-1zM809 521h1V530h-1zM810 520h1V531h-1zM811 520h1V532h-1zM812 520h1V532h-1zM813 519h1V532h-1zM814 520h1V533h-1zM815 520h1V532h-1zM816 520h1V532h-1zM817 522h1V532h-1zM818 519h1V534h-1zM819 522h1V531h-1zM820 522h1V531h-1zM821 519h1V532h-1zM822 520h1V531h-1zM823 521h1V531h-1zM824 519h1V529h-1zM825 521h1V540h-1zM826 520h1V531h-1zM827 521h1V530h-1zM828 521h1V531h-1zM829 521h1V532h-1zM830 522h1V532h-1zM831 520h1V532h-1zM832 521h1V531h-1zM833 522h1V531h-1zM834 521h1V535h-1zM835 521h1V529h-1zM836 520h1V532h-1zM837 523h1V532h-1zM838 521h1V530h-1zM839 521h1V531h-1zM840 521h1V532h-1zM841 520h1V534h-1zM842 521h1V534h-1zM843 521h1V534h-1zM844 521h1V531h-1zM845 520h1V533h-1zM846 520h1V533h-1zM847 522h1V531h-1zM848 521h1V531h-1zM849 521h1V530h-1zM850 520h1V534h-1zM851 520h1V534h-1zM852 523h1V533h-1zM853 521h1V532h-1zM854 521h1V533h-1zM855 521h1V531h-1zM856 522h1V532h-1zM857 522h1V532h-1zM858 521h1V532h-1zM859 521h1V530h-1zM860 522h1V531h-1zM861 521h1V534h-1zM862 522h1V532h-1zM863 522h1V533h-1zM864 521h1V533h-1zM865 523h1V533h-1zM866 522h1V535h-1zM867 521h1V532h-1zM868 523h1V533h-1zM869 522h1V538h-1zM870 522h1V531h-1zM871 522h1V534h-1zM872 523h1V532h-1zM873 522h1V531h-1zM874 522h1V533h-1zM875 521h1V532h-1zM876 522h1V535h-1zM877 521h1V532h-1zM878 522h1V532h-1zM879 521h1V531h-1zM880 521h1V534h-1zM881 521h1V533h-1zM882 521h1V532h-1zM883 523h1V532h-1zM884 522h1V532h-1zM885 521h1V532h-1zM886 521h1V532h-1zM887 522h1V534h-1zM888 522h1V531h-1zM889 522h1V533h-1zM890 523h1V534h-1zM891 521h1V533h-1zM892 521h1V537h-1zM893 523h1V535h-1zM894 522h1V537h-1zM895 521h1V533h-1zM896 523h1V531h-1zM897 523h1V534h-1zM898 522h1V532h-1zM899 522h1V533h-1zM900 523h1V534h-1zM901 523h1V536h-1zM902 523h1V534h-1zM903 522h1V531h-1zM904 524h1V536h-1zM905 524h1V534h-1zM906 523h1V533h-1zM907 523h1V533h-1zM908 523h1V533h-1zM909 523h1V532h-1zM910 523h1V533h-1zM911 523h1V534h-1zM912 522h1V532h-1zM913 522h1V533h-1zM914 523h1V534h-1zM915 523h1V533h-1zM916 523h1V532h-1zM917 522h1V533h-1zM918 522h1V537h-1zM919 522h1V534h-1zM920 522h1V536h-1zM921 523h1V534h-1zM922 522h1V535h-1zM923 523h1V534h-1zM924 523h1V532h-1zM925 523h1V531h-1zM926 521h1V533h-1zM927 523h1V535h-1zM928 523h1V531h-1zM929 523h1V533h-1zM930 523h1V535h-1zM931 523h1V534h-1zM932 523h1V532h-1zM933 522h1V535h-1zM934 523h1V534h-1zM935 523h1V533h-1zM936 523h1V536h-1zM937 523h1V533h-1zM938 523h1V534h-1zM939 522h1V535h-1zM940 523h1V533h-1zM941 522h1V533h-1zM942 523h1V535h-1zM943 523h1V534h-1zM944 523h1V534h-1zM945 523h1V533h-1zM946 523h1V533h-1zM947 523h1V533h-1zM948 523h1V532h-1zM949 523h1V535h-1zM950 524h1V534h-1zM951 524h1V533h-1zM952 523h1V533h-1zM953 523h1V533h-1zM954 522h1V535h-1zM955 524h1V535h-1zM956 523h1V540h-1zM957 523h1V536h-1zM958 523h1V533h-1zM959 524h1V535h-1zM960 524h1V536h-1zM961 523h1V534h-1zM962 523h1V533h-1zM963 523h1V533h-1zM964 523h1V536h-1zM965 523h1V534h-1zM966 524h1V534h-1zM967 524h1V532h-1zM968 522h1V535h-1zM969 523h1V533h-1zM970 523h1V534h-1zM971 523h1V532h-1zM972 524h1V535h-1zM973 523h1V535h-1zM974 523h1V533h-1zM975 523h1V534h-1zM976 524h1V534h-1zM977 524h1V533h-1zM978 524h1V536h-1zM979 523h1V533h-1zM980 524h1V537h-1zM981 523h1V536h-1zM982 523h1V533h-1zM983 523h1V533h-1zM984 523h1V534h-1zM985 524h1V534h-1zM986 523h1V535h-1zM987 523h1V534h-1zM988 523h1V535h-1zM989 524h1V535h-1zM990 523h1V535h-1zM991 523h1V534h-1zM992 523h1V537h-1zM993 522h1V535h-1zM994 525h1V533h-1zM995 523h1V536h-1zM996 524h1V535h-1zM997 524h1V536h-1zM998 524h1V533h-1zM999 523h1V534h-1zM1000 523h1V534h-1zM1001 523h1V534h-1zM1002 524h1V537h-1zM1003 525h1V536h-1zM1004 523h1V535h-1zM1005 524h1V535h-1zM1006 523h1V533h-1zM1007 524h1V535h-1zM1008 523h1V539h-1zM1009 524h1V533h-1zM1010 524h1V535h-1zM1011 523h1V535h-1zM1012 523h1V534h-1zM1013 524h1V534h-1zM1014 523h1V534h-1zM1015 524h1V537h-1zM1016 523h1V536h-1zM1017 524h1V537h-1zM1018 523h1V536h-1zM1019 523h1V535h-1zM1020 524h1V537h-1zM1021 524h1V537h-1zM1022 524h1V536h-1zM1023 523h1V536h-1zM1024 524h1V535h-1zM1025 523h1V536h-1zM1026 523h1V538h-1zM1027 524h1V538h-1zM1028 523h1V534h-1zM1029 524h1V533h-1zM1030 525h1V536h-1zM1031 524h1V536h-1zM1032 525h1V536h-1zM1033 523h1V537h-1zM1034 523h1V535h-1zM1035 524h1V535h-1zM1036 523h1V536h-1zM1037 524h1V535h-1zM1038 525h1V535h-1zM1039 523h1V536h-1zM1040 524h1V536h-1zM1041 523h1V537h-1zM1042 525h1V537h-1zM1043 524h1V534h-1zM1044 524h1V539h-1zM1045 525h1V538h-1zM1046 524h1V536h-1zM1047 523h1V540h-1zM1048 525h1V537h-1zM1049 524h1V534h-1zM1050 522h1V537h-1zM1051 524h1V537h-1zM1052 524h1V536h-1zM1053 525h1V535h-1zM1054 525h1V534h-1zM1055 524h1V536h-1zM1056 524h1V534h-1zM1057 523h1V537h-1zM1058 525h1V537h-1zM1059 524h1V534h-1zM1060 524h1V535h-1zM1061 523h1V535h-1zM1062 524h1V535h-1zM1063 524h1V538h-1zM1064 525h1V537h-1zM1065 525h1V535h-1zM1066 525h1V536h-1zM1067 524h1V535h-1zM1068 525h1V535h-1zM1069 523h1V535h-1zM1070 523h1V537h-1zM1071 524h1V536h-1zM1072 525h1V537h-1zM1073 523h1V536h-1zM1074 523h1V536h-1zM1075 524h1V535h-1zM1076 525h1V538h-1zM1077 525h1V536h-1zM1078 524h1V536h-1zM1079 524h1V539h-1zM1080 525h1V535h-1zM1081 525h1V540h-1zM1082 524h1V536h-1z"/><rect x="440" y="496" width="1" height="12" fill="#00ff00"/><rect x="465" y="504" width="1" height="6" fill="#00ff00"/><rect x="490" y="505" width="1" height="6" fill="#00ff00"/><rect x="533" y="508" width="1" height="5" fill="#00ff00"/><rect x="555" y="506" width="1" height="8" fill="#00ff00"/><rect x="611" y="496" width="1" height="22" fill="#00ff00"/><rect x="713" y="499" width="1" height="22" fill="#00ff00"/><rect x="772" y="494" width="1" height="29" fill="#00ff00"/><rect x="814" y="496" width="1" height="28" fill="#00ff00"/><rect x="847" y="504" width="1" height="21" fill="#00ff00"/><rect x="874" y="503" width="1" height="23" fill="#00ff00"/><rect x="896" y="498" width="1" height="28" fill="#00ff00"/><rect x="916" y="508" width="1" height="18" fill="#00ff00"/><rect x="933" y="507" width="1" height="20" fill="#00ff00"/><rect x="936" y="518" width="1" height="9" fill="#00ff00"/><rect x="949" y="503" width="1" height="24" fill="#00ff00"/><rect x="963" y="510" width="1" height="17" fill="#00ff00"/><rect x="975" y="511" width="1" height="16" fill="#00ff00"/><rect x="1026" y="510" width="1" height="18" fill="#00ff00"/><rect x="1035" y="511" width="1" height="17" fill="#00ff00"/><rect x="1043" y="501" width="1" height="27" fill="#00ff00"/><rect x="1050" y="505" width="1" height="23" fill="#00ff00"/><rect x="1064" y="509" width="1" height="19" fill="#00ff00"/><rect x="1077" y="517" width="1" height="11" fill="#00ff00"/><rect x="1079" y="521" width="1" height="7" fill="#00ff00"/></svg><span style="left:72px;top:122px;font-size:15.7px;line-height:17px;color:#000">Spectrum magnitude dBV</span><span style="right:117px;top:121px;font-size:14.6px;line-height:17px;color:#000;white-space:pre">Left  Avg:36</span><span style="right:1135px;top:134px;font-size:15px;line-height:17px;color:#000;transform:scaleY(1.08);transform-origin:50% 60%">20.0</span><span style="right:1135px;top:194px;font-size:15px;line-height:17px;color:#000;transform:scaleY(1.08);transform-origin:50% 60%">0.0</span><span style="right:1135px;top:255px;font-size:15px;line-height:17px;color:#000;transform:scaleY(1.08);transform-origin:50% 60%">-20.0</span><span style="right:1135px;top:315px;font-size:15px;line-height:17px;color:#000;transform:scaleY(1.08);transform-origin:50% 60%">-40.0</span><span style="right:1135px;top:376px;font-size:15px;line-height:17px;color:#000;transform:scaleY(1.08);transform-origin:50% 60%">-60.0</span><span style="right:1135px;top:436px;font-size:15px;line-height:17px;color:#000;transform:scaleY(1.08);transform-origin:50% 60%">-80.0</span><span style="right:1135px;top:497px;font-size:15px;line-height:17px;color:#000;transform:scaleY(1.08);transform-origin:50% 60%">-100.0</span><span style="right:1135px;top:557px;font-size:15px;line-height:17px;color:#000;transform:scaleY(1.08);transform-origin:50% 60%">-120.0</span><span style="right:1135px;top:618px;font-size:15px;line-height:17px;color:#000;transform:scaleY(1.08);transform-origin:50% 60%">-140.0</span><span style="left:20.0px;width:100px;text-align:center;top:635px;font-size:15px;line-height:17px;color:#000;transform:scaleY(1.08);transform-origin:50% 60%">20</span><span style="left:154.4px;width:100px;text-align:center;top:635px;font-size:15px;line-height:17px;color:#000;transform:scaleY(1.08);transform-origin:50% 60%">50</span><span style="left:256.0px;width:100px;text-align:center;top:635px;font-size:15px;line-height:17px;color:#000;transform:scaleY(1.08);transform-origin:50% 60%">100</span><span style="left:357.7px;width:100px;text-align:center;top:635px;font-size:15px;line-height:17px;color:#000;transform:scaleY(1.08);transform-origin:50% 60%">200</span><span style="left:492.0px;width:100px;text-align:center;top:635px;font-size:15px;line-height:17px;color:#000;transform:scaleY(1.08);transform-origin:50% 60%">500</span><span style="left:595.2px;width:100px;text-align:center;top:635px;font-size:15px;line-height:17px;color:#000;transform:scaleY(1.08);transform-origin:50% 60%">1k</span><span style="left:696.8px;width:100px;text-align:center;top:635px;font-size:15px;line-height:17px;color:#000;transform:scaleY(1.08);transform-origin:50% 60%">2k</span><span style="left:831.2px;width:100px;text-align:center;top:635px;font-size:15px;line-height:17px;color:#000;transform:scaleY(1.08);transform-origin:50% 60%">5k</span><span style="left:932.9px;width:100px;text-align:center;top:635px;font-size:15px;line-height:17px;color:#000;transform:scaleY(1.08);transform-origin:50% 60%">10k</span><span style="left:1034.5px;width:100px;text-align:center;top:635px;font-size:15px;line-height:17px;color:#000;transform:scaleY(1.08);transform-origin:50% 60%">20k</span><span style="right:117.5px;top:651px;font-size:15px;line-height:17px;color:#000;transform:scaleY(1.08);transform-origin:50% 60%">Frequency(Hz)</span><span style="left:69px;top:651px;font-size:14.7px;line-height:17px;color:#000;transform:scaleY(1.08);transform-origin:0 60%">Cursor: 1000.49 Hz, -105.20 dB</span><span style="left:70px;top:671.5px;font-size:14.55px;line-height:17px;color:#cc0000;white-space:pre;transform:scaleY(1.08);transform-origin:0 60%">RMS =  -58.7 dBV   THD =100.00%   THD+N =100.00%</span><span style="left:1088px;top:143.5px;font-size:16.5px;line-height:17px;color:#000">A</span><span style="left:1088px;top:159.6px;font-size:16.5px;line-height:17px;color:#000">R</span><span style="left:1088px;top:175.7px;font-size:16.5px;line-height:17px;color:#000">T</span><span style="left:1088px;top:191.8px;font-size:16.5px;line-height:17px;color:#000">A</span><span style="left:1163px;top:100px;font-size:11px;line-height:13px;color:#000">Top</span><div style="left:1163px;top:118px;width:16px;height:17px;background:#a19fa4"></div><div style="left:1163px;top:118px;width:15px;height:1px;background:#d6d5d8"></div><div style="left:1163px;top:118px;width:1px;height:16px;background:#d6d5d8"></div><div style="left:1163px;top:134px;width:16px;height:1px;background:#404040"></div><div style="left:1178px;top:118px;width:1px;height:17px;background:#404040"></div><div style="left:1164px;top:133px;width:14px;height:1px;background:#5f5f63"></div><div style="left:1177px;top:119px;width:1px;height:15px;background:#5f5f63"></div><div style="left:1163px;top:135px;width:16px;height:17px;background:#a19fa4"></div><div style="left:1163px;top:135px;width:15px;height:1px;background:#d6d5d8"></div><div style="left:1163px;top:135px;width:1px;height:16px;background:#d6d5d8"></div><div style="left:1163px;top:151px;width:16px;height:1px;background:#404040"></div><div style="left:1178px;top:135px;width:1px;height:17px;background:#404040"></div><div style="left:1164px;top:150px;width:14px;height:1px;background:#5f5f63"></div><div style="left:1177px;top:136px;width:1px;height:15px;background:#5f5f63"></div><svg style="left:1167px;top:124px" width="7" height="4" shape-rendering="crispEdges"><path d="M3.5 0l3.5 4h-7z" fill="#000"/></svg><svg style="left:1167px;top:141px" width="7" height="4" shape-rendering="crispEdges"><path d="M0 0h7l-3.5 4z" fill="#000"/></svg><div style="left:1157px;top:162px;width:30px;height:20px;background:#a19fa4"></div><div style="left:1157px;top:162px;width:29px;height:1px;background:#d6d5d8"></div><div style="left:1157px;top:162px;width:1px;height:19px;background:#d6d5d8"></div><div style="left:1157px;top:181px;width:30px;height:1px;background:#404040"></div><div style="left:1186px;top:162px;width:1px;height:20px;background:#404040"></div><div style="left:1158px;top:180px;width:28px;height:1px;background:#5f5f63"></div><div style="left:1185px;top:163px;width:1px;height:18px;background:#5f5f63"></div><span style="left:1165px;top:166px;font-size:11px;line-height:13px;color:#000">Fit</span><span style="left:1156px;top:197px;font-size:11px;line-height:13px;color:#000">Range</span><div style="left:1163px;top:214px;width:16px;height:17px;background:#a19fa4"></div><div style="left:1163px;top:214px;width:15px;height:1px;background:#d6d5d8"></div><div style="left:1163px;top:214px;width:1px;height:16px;background:#d6d5d8"></div><div style="left:1163px;top:230px;width:16px;height:1px;background:#404040"></div><div style="left:1178px;top:214px;width:1px;height:17px;background:#404040"></div><div style="left:1164px;top:229px;width:14px;height:1px;background:#5f5f63"></div><div style="left:1177px;top:215px;width:1px;height:15px;background:#5f5f63"></div><div style="left:1163px;top:231px;width:16px;height:17px;background:#a19fa4"></div><div style="left:1163px;top:231px;width:15px;height:1px;background:#d6d5d8"></div><div style="left:1163px;top:231px;width:1px;height:16px;background:#d6d5d8"></div><div style="left:1163px;top:247px;width:16px;height:1px;background:#404040"></div><div style="left:1178px;top:231px;width:1px;height:17px;background:#404040"></div><div style="left:1164px;top:246px;width:14px;height:1px;background:#5f5f63"></div><div style="left:1177px;top:232px;width:1px;height:15px;background:#5f5f63"></div><svg style="left:1167px;top:220px" width="7" height="4" shape-rendering="crispEdges"><path d="M3.5 0l3.5 4h-7z" fill="#000"/></svg><svg style="left:1167px;top:237px" width="7" height="4" shape-rendering="crispEdges"><path d="M0 0h7l-3.5 4z" fill="#000"/></svg><div style="left:1157px;top:263px;width:30px;height:21px;background:#a19fa4"></div><div style="left:1157px;top:263px;width:29px;height:1px;background:#d6d5d8"></div><div style="left:1157px;top:263px;width:1px;height:20px;background:#d6d5d8"></div><div style="left:1157px;top:283px;width:30px;height:1px;background:#404040"></div><div style="left:1186px;top:263px;width:1px;height:21px;background:#404040"></div><div style="left:1158px;top:282px;width:28px;height:1px;background:#5f5f63"></div><div style="left:1185px;top:264px;width:1px;height:19px;background:#5f5f63"></div><span style="left:1163px;top:267px;font-size:11px;line-height:13px;color:#000">Set</span><span style="left:1156px;top:300px;font-size:11px;line-height:13px;color:#000">FrHigh</span><div style="left:1157px;top:318px;width:15px;height:16px;background:#a19fa4"></div><div style="left:1157px;top:318px;width:14px;height:1px;background:#d6d5d8"></div><div style="left:1157px;top:318px;width:1px;height:15px;background:#d6d5d8"></div><div style="left:1157px;top:333px;width:15px;height:1px;background:#404040"></div><div style="left:1171px;top:318px;width:1px;height:16px;background:#404040"></div><div style="left:1158px;top:332px;width:13px;height:1px;background:#5f5f63"></div><div style="left:1170px;top:319px;width:1px;height:14px;background:#5f5f63"></div><div style="left:1172px;top:318px;width:15px;height:16px;background:#a19fa4"></div><div style="left:1172px;top:318px;width:14px;height:1px;background:#d6d5d8"></div><div style="left:1172px;top:318px;width:1px;height:15px;background:#d6d5d8"></div><div style="left:1172px;top:333px;width:15px;height:1px;background:#404040"></div><div style="left:1186px;top:318px;width:1px;height:16px;background:#404040"></div><div style="left:1173px;top:332px;width:13px;height:1px;background:#5f5f63"></div><div style="left:1185px;top:319px;width:1px;height:14px;background:#5f5f63"></div><svg style="left:1162px;top:323px" width="3" height="5" shape-rendering="crispEdges"><path fill="#000" d="M2 0h1v1h-1zM1 1h2v1h-2zM0 2h3v1h-3zM1 3h2v1h-2zM2 4h1v1h-1z"/></svg><svg style="left:1179px;top:323px" width="3" height="5" shape-rendering="crispEdges"><path fill="#000" d="M0 0h1v1h-1zM0 1h2v1h-2zM0 2h3v1h-3zM0 3h2v1h-2zM0 4h1v1h-1z"/></svg><span style="left:1159px;top:345px;font-size:11px;line-height:13px;color:#000">FrLow</span><div style="left:1157px;top:361px;width:15px;height:16px;background:#a19fa4"></div><div style="left:1157px;top:361px;width:14px;height:1px;background:#d6d5d8"></div><div style="left:1157px;top:361px;width:1px;height:15px;background:#d6d5d8"></div><div style="left:1157px;top:376px;width:15px;height:1px;background:#404040"></div><div style="left:1171px;top:361px;width:1px;height:16px;background:#404040"></div><div style="left:1158px;top:375px;width:13px;height:1px;background:#5f5f63"></div><div style="left:1170px;top:362px;width:1px;height:14px;background:#5f5f63"></div><div style="left:1172px;top:361px;width:15px;height:16px;background:#a19fa4"></div><div style="left:1172px;top:361px;width:14px;height:1px;background:#d6d5d8"></div><div style="left:1172px;top:361px;width:1px;height:15px;background:#d6d5d8"></div><div style="left:1172px;top:376px;width:15px;height:1px;background:#404040"></div><div style="left:1186px;top:361px;width:1px;height:16px;background:#404040"></div><div style="left:1173px;top:375px;width:13px;height:1px;background:#5f5f63"></div><div style="left:1185px;top:362px;width:1px;height:14px;background:#5f5f63"></div><svg style="left:1162px;top:366px" width="3" height="5" shape-rendering="crispEdges"><path fill="#000" d="M2 0h1v1h-1zM1 1h2v1h-2zM0 2h3v1h-3zM1 3h2v1h-2zM2 4h1v1h-1z"/></svg><svg style="left:1179px;top:366px" width="3" height="5" shape-rendering="crispEdges"><path fill="#000" d="M0 0h1v1h-1zM0 1h2v1h-2zM0 2h3v1h-3zM0 3h2v1h-2zM0 4h1v1h-1z"/></svg><span style="left:5px;top:695px;font-size:11px;line-height:13px;color:#000">Ready</span><div style="left:873px;top:693px;width:72px;height:1px;background:#5f5f63"></div><div style="left:873px;top:693px;width:1px;height:16px;background:#5f5f63"></div><div style="left:873px;top:708px;width:73px;height:1px;background:#d6d5d8"></div><div style="left:945px;top:693px;width:1px;height:16px;background:#d6d5d8"></div><span style="left:877px;top:695px;font-size:11px;line-height:13px;color:#000">L:-54.4dB</span><div style="left:948px;top:693px;width:72px;height:1px;background:#5f5f63"></div><div style="left:948px;top:693px;width:1px;height:16px;background:#5f5f63"></div><div style="left:948px;top:708px;width:73px;height:1px;background:#d6d5d8"></div><div style="left:1020px;top:693px;width:1px;height:16px;background:#d6d5d8"></div><span style="left:952px;top:695px;font-size:11px;line-height:13px;color:#000">R:-80.5dB</span><div style="left:1023px;top:693px;width:155px;height:1px;background:#5f5f63"></div><div style="left:1023px;top:693px;width:1px;height:16px;background:#5f5f63"></div><div style="left:1023px;top:708px;width:156px;height:1px;background:#d6d5d8"></div><div style="left:1178px;top:693px;width:1px;height:16px;background:#d6d5d8"></div><span style="left:1027px;top:695px;font-size:11px;line-height:13px;color:#000">Spectrum Analyzer</span><svg style="left:1184px;top:696px" width="13" height="13" shape-rendering="crispEdges"><path fill="#d6d5d8" d="M12 0h1v1h-1zM11 1h1v1h-1zM10 2h1v1h-1zM9 3h1v1h-1zM8 4h1v1h-1zM12 4h1v1h-1zM7 5h1v1h-1zM11 5h1v1h-1zM6 6h1v1h-1zM10 6h1v1h-1zM5 7h1v1h-1zM9 7h1v1h-1zM4 8h1v1h-1zM8 8h1v1h-1zM12 8h1v1h-1zM3 9h1v1h-1zM7 9h1v1h-1zM11 9h1v1h-1zM2 10h1v1h-1zM6 10h1v1h-1zM10 10h1v1h-1zM1 11h1v1h-1zM5 11h1v1h-1zM9 11h1v1h-1zM0 12h1v1h-1zM4 12h1v1h-1zM8 12h1v1h-1z"/><path fill="#5f5f63" d="M12 1h1v1h-1zM11 2h2v1h-2zM10 3h2v1h-2zM9 4h2v1h-2zM8 5h2v1h-2zM12 5h1v1h-1zM7 6h2v1h-2zM11 6h2v1h-2zM6 7h2v1h-2zM10 7h2v1h-2zM5 8h2v1h-2zM9 8h2v1h-2zM4 9h2v1h-2zM8 9h2v1h-2zM12 9h1v1h-1zM3 10h2v1h-2zM7 10h2v1h-2zM11 10h2v1h-2zM2 11h2v1h-2zM6 11h2v1h-2zM10 11h2v1h-2zM1 12h2v1h-2zM5 12h2v1h-2zM9 12h2v1h-2z"/></svg>
</body></html>
